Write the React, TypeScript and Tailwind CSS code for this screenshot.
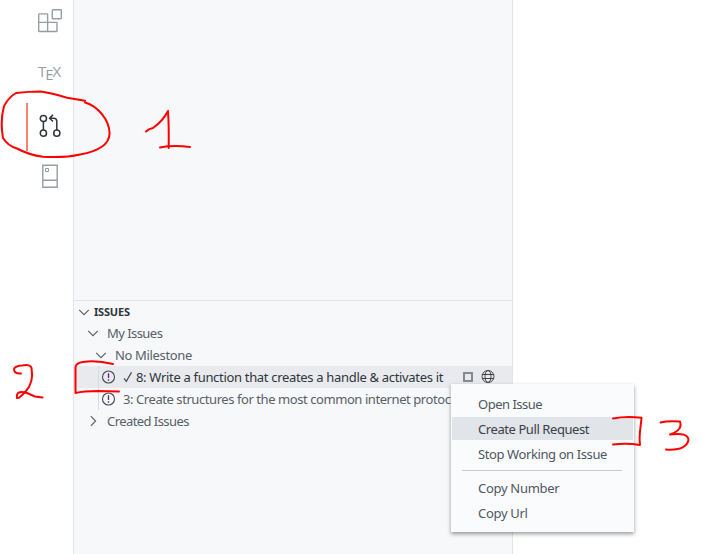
import React from 'react';

const textFont = "font-['Noto_Sans','Open_Sans',sans-serif]";

function Chevron({ open = true }: { open?: boolean }) {
  return (
    <svg className="h-4 w-4 shrink-0" viewBox="0 0 16 16" fill="none" stroke="#586069" strokeWidth="1.1">
      <path d={open ? 'M3.2 5.8 L8 10.6 L12.8 5.8' : 'M5.8 3.2 L10.6 8 L5.8 12.8'} />
    </svg>
  );
}

function IssueIcon() {
  return (
    <svg className="h-4 w-4 shrink-0" viewBox="0 0 16 16" fill="none" stroke="#424a54" strokeWidth="1.1">
      <circle cx="7.5" cy="8" r="6" />
      <path d="M7.5 4.2v4.8M7.5 10.3v1.5" stroke="#68217a" strokeWidth="1.3" />
    </svg>
  );
}

function ActivityBar() {
  return (
    <nav className="flex h-full w-[73px] shrink-0 flex-col pl-[26px]">
      <div className="flex h-[46px] items-center pl-3">
        <svg className="-mt-1 h-6 w-6" viewBox="0 0 24 24" fill="none" stroke="#959da5" strokeWidth="1.4">
          <rect x="14.3" y="0.7" width="9" height="9" rx="0.6" />
          <path d="M1.2 4.9h7.9q.5 0 .5.5v8h8.9q.5 0 .5.5v8.1q0 .5-.5.5H1.2q-.5 0-.5-.5V5.4q0-.5.5-.5zM.7 13.4h8.9v9.1" />
        </svg>
      </div>
      <div className="flex h-[51px] items-center pl-3 font-['Open_Sans','Noto_Sans',sans-serif] text-[15px] leading-none text-[#959da5]">
        <span>T</span>
        <span className="relative top-[3px] -ml-px">E</span>
        <span className="-ml-px">X</span>
      </div>
      <div className="mt-[2px] flex h-[51px] items-center">
        <div className="mt-1 h-12 w-[2px] bg-[#f9826c]" />
        <svg className="mt-[2px] ml-[11px] h-6 w-6" viewBox="0 0 24 24" fill="none" stroke="#2f363d" strokeWidth="1.5">
          <circle cx="4.4" cy="4.5" r="3.1" />
          <circle cx="4.4" cy="19.2" r="3.1" />
          <circle cx="17.8" cy="19.2" r="3.1" />
          <path d="M4.4 7.6v8.5M17.8 16.1V7.3q0-3.1-3.1-3.1h-4M14 .9l-3.4 3.3L14 7.5" />
        </svg>
      </div>
      <svg className="mt-[14px] ml-4 h-6 w-4" viewBox="0 0 16 24" fill="none" stroke="#959da5">
        <path d="M.8 1.2h14.4v22H.8zM.8 16.2h14.4" strokeWidth="1.4" />
        <path d="M3.5 4.5h3v3h-3z" />
      </svg>
    </nav>
  );
}

function IssueTree() {
  return (
    <section className={`${textFont} text-[13px] leading-[22px] text-[#586069]`}>
      <div className="flex h-[22px] items-center border-t border-[#e1e4e8] pl-[2px] text-[#2f363d]">
        <Chevron />
        <span className="ml-[2px] text-[11px] font-bold tracking-[-0.2px] whitespace-nowrap">ISSUES</span>
      </div>
      <div className="flex h-[22px] items-center pl-[11px]">
        <Chevron />
        <span className="ml-[6px] whitespace-nowrap tracking-[-0.55px]">My Issues</span>
      </div>
      <div className="flex h-[22px] items-center pl-[19px]">
        <Chevron />
        <span className="ml-[6px] whitespace-nowrap tracking-[-0.35px]">No Milestone</span>
      </div>
      <div className="flex h-[22px] items-center bg-[#e8eaed] pl-6 text-[#2f363d]">
        <div className="h-full w-px bg-[#d8dbdf]" />
        <div className="ml-[2px]"><IssueIcon /></div>
        <svg className="ml-[6px] h-3 w-[10px]" viewBox="0 0 10 12" fill="none" stroke="#444d56" strokeWidth="1.2"><path d="M1 7.3 3.3 10.4 8.5 1.4" /></svg>
        <span className="ml-[3px] whitespace-nowrap tracking-[-0.32px]">8: Write a function that creates a handle &amp; activates it</span>
        <div className="ml-auto flex items-center gap-[8px] pr-[17px]">
          <div className="h-[10px] w-[10px] border-2 border-[#858a90]" />
          <svg className="h-[14px] w-[14px]" viewBox="0 0 14 14" fill="none" stroke="#424242" strokeWidth="1">
            <circle cx="7" cy="6.5" r="6" /><ellipse cx="7" cy="6.5" rx="3" ry="6" /><path d="M1.3 4.5h11.4M1.3 8.5h11.4" />
          </svg>
        </div>
      </div>
      <div className="flex h-[22px] items-center pl-6">
        <div className="h-full w-px bg-[#d8dbdf]" />
        <div className="ml-[2px]"><IssueIcon /></div>
        <span className="ml-[6px] whitespace-nowrap tracking-[-0.43px]">3: Create structures for the most common internet protocols</span>
      </div>
      <div className="flex h-[22px] items-center pl-[11px]">
        <Chevron open={false} />
        <span className="ml-[6px] whitespace-nowrap tracking-[-0.57px]">Created Issues</span>
      </div>
    </section>
  );
}

function ContextMenu() {
  return (
    <div className={`${textFont} absolute left-[451px] top-[384px] h-[148px] w-[183px] bg-[#fafbfc] px-px pt-2 text-[13px] text-[#4f5760] shadow-[0_2px_4px_rgba(0,0,0,0.4)]`}>
      <div className="h-[25px] pl-[26px] leading-[25px] whitespace-nowrap tracking-[-0.5px]">Open Issue</div>
      <div className="mb-[2px] h-[23px] bg-[#e1e4e8] pl-[26px] leading-[25px] whitespace-nowrap tracking-[-0.42px] text-[#3a4149]">Create Pull Request</div>
      <div className="h-[25px] pl-[26px] leading-[25px] whitespace-nowrap tracking-[-0.4px]">Stop Working on Issue</div>
      <div className="mr-[11px] ml-[10px] mt-[3px] mb-[5px] h-px bg-[#c8cacc]" />
      <div className="h-[25px] pl-[26px] leading-[25px] whitespace-nowrap tracking-[-0.3px]">Copy Number</div>
      <div className="h-[25px] pl-[26px] leading-[25px] whitespace-nowrap tracking-[-0.3px]">Copy Url</div>
    </div>
  );
}

function Annotations() {
  return (
    <svg className="pointer-events-none absolute inset-0 h-[554px] w-[719px]" viewBox="0 0 719 554" fill="none" stroke="#ff0000" strokeWidth="2" strokeLinecap="round" strokeLinejoin="round">
      <path d="M85 100.7 L67 97.7 Q51 93 41 91.5 Q28 91.5 16 93 Q9 97 4 106 Q0 121 3 138 Q8 146 17 148.5 Q29 155 43 156.7 Q65 158 80 154.5 C94 152 109 146 109.5 134 C110 121 98 106 85 102.5" />
      <path d="M146 131.5 Q149 128.5 153 128 C160 123 164 119 168 111 Q169 125 168.7 148 M160 147.5 Q173 145 190 147" />
      <path d="M21 373.5 Q14 374 14 369 Q15 366 22 365.5 Q31 364 31.5 368 Q34 382 26 391 Q19 399 17 398 C16 392 20 391 27 393 L35 396.5 L42.5 397.5" />
      <path d="M113 364 Q96 360 83 362 Q76 363 75.5 367 L75.5 393 Q84 391 98 391 L119 391.5" />
      <path d="M613 418.5 Q625 416 641.5 417.7 C641 427 638.5 434 640 445 Q627 443 613 444.5" />
      <path d="M660.5 422.5 Q668 420.5 680 421.5 Q683 430 670 434.5 Q688 432 688.5 440 Q686 451 666 449.5" />
    </svg>
  );
}

export default function App() {
  return (
    <main className="relative flex h-[554px] w-[719px] overflow-hidden bg-white">
      <ActivityBar />
      <aside className="flex h-full w-[440px] shrink-0 flex-col overflow-hidden border-x border-[#e1e4e8] bg-[#f6f8fa]">
        <div className="h-[300px] shrink-0" />
        <IssueTree />
      </aside>
      <ContextMenu />
      <Annotations />
    </main>
  );
}
